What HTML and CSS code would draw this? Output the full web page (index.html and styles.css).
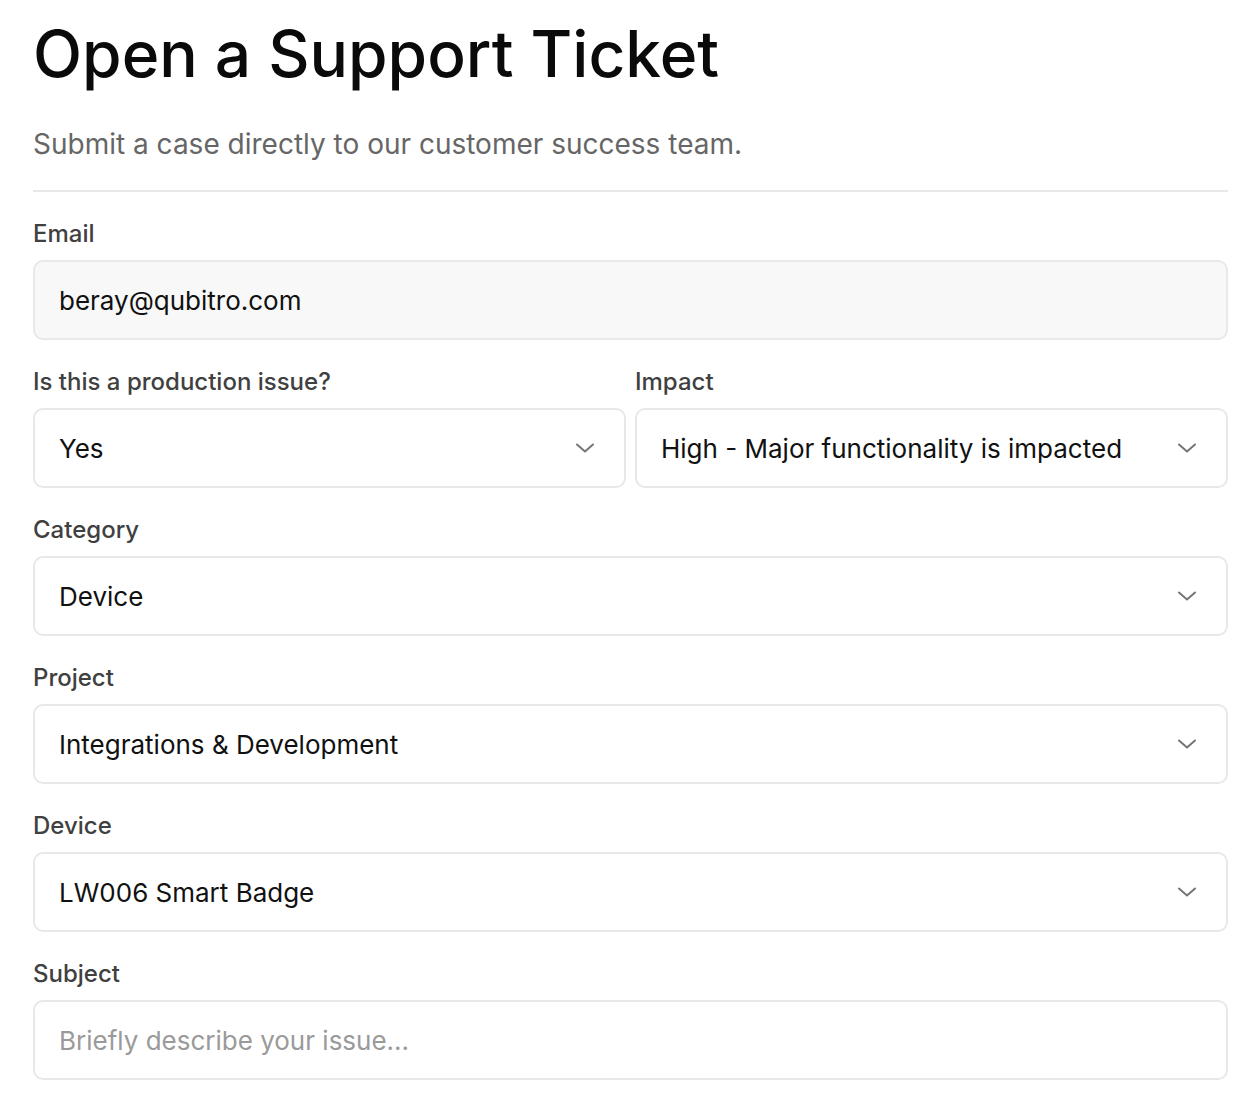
FILE: index.html
```html
<!DOCTYPE html>
<html lang="en">
<head>
<meta charset="utf-8">
<title>Open a Support Ticket</title>
<link rel="stylesheet" href="styles.css">
</head>
<body>
<main class="page">
  <header class="head">
    <h1 class="title">Open a Support Ticket</h1>
    <p class="subtitle">Submit a case directly to our customer success team.</p>
  </header>
  <form class="form">
    <div class="field">
      <label class="label">Email</label>
      <div class="input input-readonly">beray@qubitro.com</div>
    </div>
    <div class="row">
      <div class="field">
        <label class="label">Is this a production issue?</label>
        <div class="input select"><span>Yes</span><svg class="chev" viewBox="0 0 20 10" aria-hidden="true"><path d="M2 1.5 L10 8.5 L18 1.5"/></svg></div>
      </div>
      <div class="field">
        <label class="label">Impact</label>
        <div class="input select"><span>High - Major functionality is impacted</span><svg class="chev" viewBox="0 0 20 10" aria-hidden="true"><path d="M2 1.5 L10 8.5 L18 1.5"/></svg></div>
      </div>
    </div>
    <div class="field">
      <label class="label">Category</label>
      <div class="input select"><span>Device</span><svg class="chev" viewBox="0 0 20 10" aria-hidden="true"><path d="M2 1.5 L10 8.5 L18 1.5"/></svg></div>
    </div>
    <div class="field">
      <label class="label">Project</label>
      <div class="input select"><span>Integrations &amp; Development</span><svg class="chev" viewBox="0 0 20 10" aria-hidden="true"><path d="M2 1.5 L10 8.5 L18 1.5"/></svg></div>
    </div>
    <div class="field">
      <label class="label">Device</label>
      <div class="input select"><span>LW006 Smart Badge</span><svg class="chev" viewBox="0 0 20 10" aria-hidden="true"><path d="M2 1.5 L10 8.5 L18 1.5"/></svg></div>
    </div>
    <div class="field">
      <label class="label">Subject</label>
      <div class="input placeholder">Briefly describe your issue...</div>
    </div>
  </form>
</main>
</body>
</html>
```

FILE: styles.css
```css
* { box-sizing: border-box; }
html, body { margin: 0; padding: 0; background: #ffffff; }
body {
  font-family: Inter, "Noto Sans", "Liberation Sans", sans-serif;
  color: #111111;
}
.page {
  padding: 14px 32px 0 33px;
}
.head {
  border-bottom: 2px solid #e8e8e8;
  padding-bottom: 28px;
}
.title {
  margin: 0;
  font-size: 64px;
  font-weight: 500;
  line-height: 80px;
  letter-spacing: 0;
  color: #0a0a0a;
}
.subtitle {
  margin: 32px 0 0;
  font-size: 28px;
  line-height: 36px;
  color: #666666;
}
.form {
  display: flex;
  flex-direction: column;
  gap: 26px;
  padding-top: 26px;
}
.row {
  display: grid;
  grid-template-columns: 1fr 1fr;
  gap: 9px;
}
.field {
  display: flex;
  flex-direction: column;
  gap: 10px;
}
.label {
  font-size: 24px;
  line-height: 32px;
  font-weight: 500;
  color: #404040;
}
.input {
  height: 80px;
  border: 2px solid #e8e8e8;
  border-radius: 10px;
  background: #ffffff;
  padding: 0 24px 0 24px;
  display: flex;
  align-items: center;
  font-size: 26px;
  color: #111111;
}
.input-readonly {
  background: #f8f8f8;
}
.select {
  justify-content: space-between;
  padding-right: 29px;
}
.placeholder {
  color: #9a9a9a;
}
.chev {
  width: 20px;
  height: 10px;
  fill: none;
  stroke: #757575;
  stroke-width: 2;
  stroke-linecap: round;
  stroke-linejoin: round;
  flex: none;
}
```
